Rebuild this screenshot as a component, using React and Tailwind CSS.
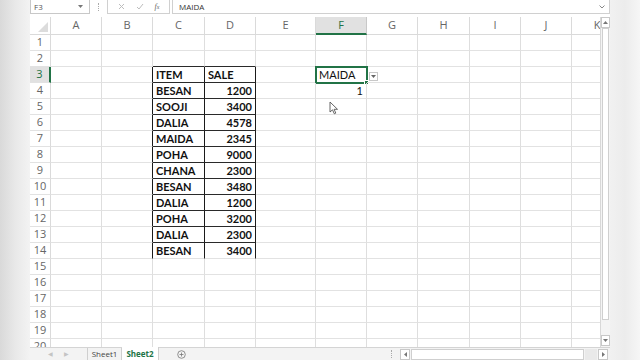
import React from 'react';

const COLS = [
  { k: 'A', w: 'w-[51px]' },
  { k: 'B', w: 'w-[51px]' },
  { k: 'C', w: 'w-[52px]' },
  { k: 'D', w: 'w-[51px]' },
  { k: 'E', w: 'w-[60px]' },
  { k: 'F', w: 'w-[51px]' },
  { k: 'G', w: 'w-[51px]' },
  { k: 'H', w: 'w-[52px]' },
  { k: 'I', w: 'w-[51px]' },
  { k: 'J', w: 'w-[51px]' },
  { k: 'K', w: 'w-[51px]' },
];

const ITEMS = [
  ['BESAN', 1200],
  ['SOOJI', 3400],
  ['DALIA', 4578],
  ['MAIDA', 2345],
  ['POHA', 9000],
  ['CHANA', 2300],
  ['BESAN', 3480],
  ['DALIA', 1200],
  ['POHA', 3200],
  ['DALIA', 2300],
  ['BESAN', 3400],
];

const ROWS = Array.from({ length: 20 }, (_, i) => i + 1);

function cellContent(row, col) {
  if (row === 3 && col === 'C') return { text: 'ITEM', bold: true };
  if (row === 3 && col === 'D') return { text: 'SALE', bold: true };
  if (row >= 4 && row <= 14) {
    const item = ITEMS[row - 4];
    if (col === 'C') return { text: item[0], bold: true };
    if (col === 'D') return { text: item[1], bold: true, right: true };
  }
  if (row === 3 && col === 'F') return { text: 'MAIDA' };
  if (row === 4 && col === 'F') return { text: '1', right: true };
  return null;
}

function Cell({ row, col }) {
  const rightDark = ['B', 'C', 'D'].includes(col.k) && row >= 3 && row <= 14;
  const bottomDark = ['C', 'D'].includes(col.k) && row >= 2 && row <= 13;
  const content = cellContent(row, col.k);
  const selected = row === 3 && col.k === 'F';

  return (
    <div
      className={`${col.w} shrink-0 h-4 relative border-r border-b flex items-center px-[3px] ${
        rightDark ? 'border-r-[#1a1a1a]' : 'border-r-[#dedede]'
      } ${bottomDark ? 'border-b-[#2a2a2a]' : 'border-b-[#e2e2e2]'} ${
        content && content.right ? 'justify-end' : 'justify-start'
      }`}
    >
      {content && (
        <span className={`text-[11px] leading-none text-[#111] ${content.bold ? 'font-bold' : ''}`}>
          {content.text}
        </span>
      )}
      {selected && (
        <>
          <div className="absolute -left-px -top-px w-[53px] h-[18px] border-2 border-[#217346]" />
          <div className="absolute -right-[3px] -bottom-[3px] w-[5px] h-[5px] bg-[#217346] border border-white" />
          <div className="absolute left-[53px] top-[5px] w-[9px] h-[9px] border border-[#c8c8c8] bg-white flex items-center justify-center">
            <svg width="5" height="3" viewBox="0 0 5 3">
              <path d="M0 0 L5 0 L2.5 3 Z" fill="#666" />
            </svg>
          </div>
        </>
      )}
    </div>
  );
}

function FormulaBar() {
  return (
    <div className="h-[14px] flex items-stretch font-['Open_Sans',sans-serif] text-[#555]">
      <div className="w-[60px] border-r border-b border-l border-[#c8c8c8] flex items-center justify-between px-[3px]">
        <span className="text-[8px] leading-none">F3</span>
        <svg width="5" height="3" viewBox="0 0 5 3" className="mr-[3px]">
          <path d="M0 0 L5 0 L2.5 3 Z" fill="#777" />
        </svg>
      </div>
      <div className="w-[17px] flex items-center justify-center">
        <div className="h-[8px] border-l border-dotted border-[#aaa]" />
      </div>
      <div className="w-[63px] border-l border-r border-b border-[#d0d0d0] flex items-center justify-around px-[4px]">
        <svg width="7" height="7" viewBox="0 0 7 7">
          <path d="M1 1 L6 6 M6 1 L1 6" stroke="#bdbdbd" strokeWidth="1" />
        </svg>
        <svg width="8" height="7" viewBox="0 0 8 7">
          <path d="M1 4 L3 6 L7 1" stroke="#bdbdbd" strokeWidth="1" fill="none" />
        </svg>
        <span className="text-[8px] italic leading-none text-[#666] font-['Liberation_Serif',serif]">
          f<span className="text-[6px]">x</span>
        </span>
      </div>
      <div className="w-[2px]" />
      <div className="flex-1 border-l border-r border-b border-[#d0d0d0] flex items-center justify-between pl-[6px] pr-[4px]">
        <span className="text-[8px] leading-none text-[#333]">MAIDA</span>
        <svg width="6" height="4" viewBox="0 0 6 4">
          <path d="M0.5 0.5 L3 3 L5.5 0.5" stroke="#888" strokeWidth="1" fill="none" />
        </svg>
      </div>
    </div>
  );
}

function VScroll() {
  return (
    <div className="w-[10px] shrink-0 flex flex-col border-l border-[#d8d8d8] bg-[#f4f4f4]">
      <div className="h-[11px] flex items-center justify-center border border-[#c8c8c8] bg-white">
        <svg width="5" height="3" viewBox="0 0 5 3">
          <path d="M0 3 L5 3 L2.5 0 Z" fill="#777" />
        </svg>
      </div>
      <div className="h-[292px] mx-[1px] border border-[#cfcfcf] bg-white" />
      <div className="flex-1" />
      <div className="h-[11px] flex items-center justify-center border border-[#c8c8c8] bg-white mb-[1px]">
        <svg width="5" height="3" viewBox="0 0 5 3">
          <path d="M0 0 L5 0 L2.5 3 Z" fill="#777" />
        </svg>
      </div>
    </div>
  );
}

function TabBar() {
  return (
    <div className="h-[13px] flex items-stretch bg-[#f3f3f3] border-t border-[#d4d4d4] font-['Open_Sans',sans-serif]">
      <div className="w-[57px] flex items-center justify-center gap-[11px] text-[6px] text-[#c4c4c4]">
        <span>◀</span>
        <span>▶</span>
      </div>
      <div className="w-[35px] flex items-center justify-center border-l border-r border-[#cfcfcf] text-[8px] text-[#444]">
        Sheet1
      </div>
      <div className="w-[37px] -mt-px flex items-center justify-center bg-white border-r border-[#cfcfcf] text-[8px] font-bold text-[#217346]">
        Sheet2
      </div>
      <div className="w-[45px] flex items-center justify-center">
        <svg width="9" height="9" viewBox="0 0 9 9">
          <circle cx="4.5" cy="4.5" r="3.8" stroke="#777" strokeWidth="0.8" fill="none" />
          <path d="M4.5 2.5 V6.5 M2.5 4.5 H6.5" stroke="#777" strokeWidth="0.8" />
        </svg>
      </div>
      <div className="w-[196px] flex items-center justify-end pr-[8px]">
        <div className="h-[8px] border-l border-dotted border-[#aaa]" />
      </div>
      <div className="flex-1 flex items-center gap-[1px] pr-[2px]">
        <div className="w-[10px] h-[11px] flex items-center justify-center border border-[#c8c8c8] bg-white">
          <svg width="3" height="5" viewBox="0 0 3 5">
            <path d="M3 0 L3 5 L0 2.5 Z" fill="#777" />
          </svg>
        </div>
        <div className="w-[173px] h-[11px] border border-[#cfcfcf] bg-white" />
        <div className="flex-1 h-[11px] bg-[#e9e9e9]" />
        <div className="w-[10px] h-[11px] flex items-center justify-center border border-[#c8c8c8] bg-white">
          <svg width="3" height="5" viewBox="0 0 3 5">
            <path d="M0 0 L0 5 L3 2.5 Z" fill="#777" />
          </svg>
        </div>
      </div>
    </div>
  );
}

export default function App() {
  return (
    <div className="w-[640px] h-[360px] flex overflow-hidden bg-white font-['Lato',sans-serif]">
      <div className="w-[30px] shrink-0 bg-gradient-to-r from-[#d9d9d9] via-[#e8e8e8] to-[#f3f3f3]" />

      <div className="w-[580px] shrink-0 flex flex-col bg-white">
        <FormulaBar />
        <div className="h-[3px]" />

        <div className="h-[330px] flex">
          <div className="w-[570px] relative overflow-hidden">
            {/* column headers */}
            <div className="flex h-[18px] font-['Open_Sans',sans-serif]">
              <div className="w-[21px] shrink-0 border-r border-b border-[#dadada] relative bg-white">
                <svg width="10" height="10" viewBox="0 0 10 10" className="absolute right-[2px] bottom-[2px]">
                  <path d="M10 0 L10 10 L0 10 Z" fill="#dcdcdc" />
                </svg>
              </div>
              {COLS.map((c) => (
                <div
                  key={c.k}
                  className={`${c.w} shrink-0 flex items-center justify-center text-[11px] ${
                    c.k === 'F'
                      ? 'bg-[#e1e1e1] text-[#217346] border-b-2 border-b-[#217346] border-r border-r-[#c8c8c8]'
                      : 'text-[#666] border-r border-b border-[#dadada]'
                  }`}
                >
                  {c.k}
                </div>
              ))}
            </div>

            {/* rows */}
            {ROWS.map((r) => (
              <div key={r} className="flex">
                <div
                  className={`w-[21px] shrink-0 h-4 flex items-center justify-center text-[11px] font-['Open_Sans',sans-serif] border-b border-[#e2e2e2] ${
                    r === 3
                      ? 'bg-[#e1e1e1] text-[#217346] border-r-2 border-r-[#217346]'
                      : 'text-[#666] border-r border-r-[#dadada]'
                  }`}
                >
                  {r}
                </div>
                {COLS.map((c) => (
                  <Cell key={c.k} row={r} col={c} />
                ))}
              </div>
            ))}

            {/* mouse pointer */}
            <svg width="10" height="14" viewBox="0 0 10 14" className="absolute left-[299px] top-[84px]">
              <path d="M1 1 L1 11 L3.5 8.8 L5.3 12.8 L6.8 12.1 L5.1 8.3 L8.5 8.3 Z" fill="white" stroke="#555" strokeWidth="0.9" />
            </svg>
          </div>
          <VScroll />
        </div>

        <TabBar />
      </div>

      <div className="flex-1 bg-gradient-to-r from-[#f1f1f1] via-[#ececec] to-[#f6f6f6]" />
    </div>
  );
}
